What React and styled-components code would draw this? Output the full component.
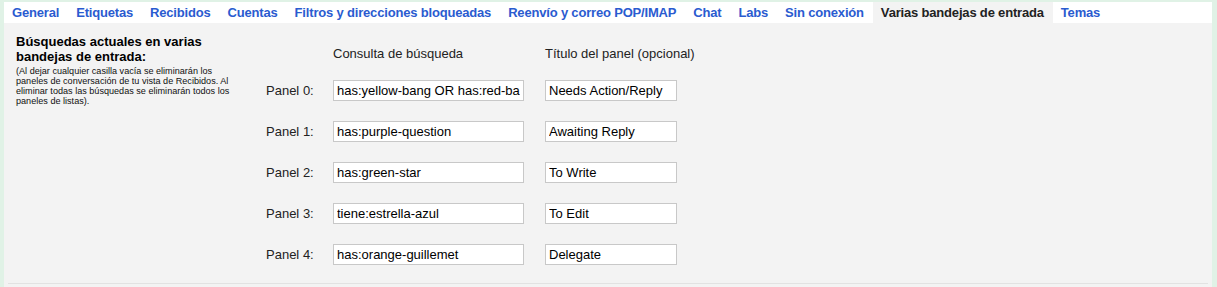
import React from "react";
import styled, { createGlobalStyle } from "styled-components";

const Global = createGlobalStyle`
  html, body { margin: 0; padding: 0; background: #e0f2e6; }
  body { font-family: Arial, "Liberation Sans", sans-serif; }
`;

const Frame = styled.div`
  padding: 2px 5px 0 4px;
  width: 1217px;
  box-sizing: border-box;
`;

const TabBar = styled.div`
  display: flex;
  height: 21px;
  background: #fff;
`;

const Tab = styled.div`
  display: flex;
  align-items: center;
  padding: 0 9px 0 8px;
  font-size: 13px;
  font-weight: bold;
  letter-spacing: -0.18px;
  white-space: nowrap;
  color: ${(p) => (p.$active ? "#222" : "#2a5bd0")};
  background: ${(p) => (p.$active ? "#f3f3f3" : "transparent")};
`;

const Content = styled.div`
  background: #f3f3f3;
  padding: 12px 0 0 0;
`;

const Body = styled.div`
  display: flex;
  padding: 0 0 18px 12px;
`;

const Description = styled.div`
  width: 220px;
  margin-right: 30px;
`;

const Heading = styled.div`
  font-size: 13px;
  font-weight: bold;
  line-height: 14.5px;
  color: #000;
`;

const Note = styled.div`
  font-size: 9.1px;
  line-height: 10px;
  color: #111;
  margin-top: 2px;
`;

const Panels = styled.div`
  display: grid;
  grid-template-columns: 67px 212px 132px;
  grid-template-rows: 14px;
  grid-auto-rows: 21px;
  row-gap: 20px;
  align-items: center;
  padding-top: 11px;
`;

const HeaderCell = styled.div`
  font-size: 13px;
  color: #222;
  align-self: start;
  line-height: 15px;
  white-space: nowrap;
  grid-column: ${(p) => p.$col};
`;

const Label = styled.div`
  font-size: 13px;
  color: #222;
`;

const Input = styled.input`
  box-sizing: border-box;
  width: ${(p) => p.$w}px;
  height: 21px;
  border: 1px solid #c8c8c8;
  background: #fff;
  padding: 0 3px;
  margin: 0;
  font-family: Arial, "Liberation Sans", sans-serif;
  font-size: 13px;
  color: #000;
  outline: none;
`;

const Rule = styled.div`
  height: 1px;
  background: #e2e2e2;
  margin: 0 4px;
`;

const Spacer = styled.div`
  height: 3px;
`;

const tabs = [
  "General",
  "Etiquetas",
  "Recibidos",
  "Cuentas",
  "Filtros y direcciones bloqueadas",
  "Reenvío y correo POP/IMAP",
  "Chat",
  "Labs",
  "Sin conexión",
  "Varias bandejas de entrada",
  "Temas",
];

const panels = [
  ["has:yellow-bang OR has:red-bang", "Needs Action/Reply"],
  ["has:purple-question", "Awaiting Reply"],
  ["has:green-star", "To Write"],
  ["tiene:estrella-azul", "To Edit"],
  ["has:orange-guillemet", "Delegate"],
];

export default function App() {
  return (
    <>
      <Global />
      <Frame>
        <TabBar>
          {tabs.map((t) => (
            <Tab key={t} $active={t === "Varias bandejas de entrada"}>
              {t}
            </Tab>
          ))}
        </TabBar>
        <Content>
          <Body>
            <Description>
              <Heading>Búsquedas actuales en varias bandejas de entrada:</Heading>
              <Note>
                (Al dejar cualquier casilla vacía se eliminarán los paneles de
                conversación de tu vista de Recibidos. Al eliminar todas las
                búsquedas se eliminarán todos los paneles de listas).
              </Note>
            </Description>
            <Panels>
              <HeaderCell $col={2}>Consulta de búsqueda</HeaderCell>
              <HeaderCell $col={3}>Título del panel (opcional)</HeaderCell>
              {panels.map(([q, t], i) => (
                <React.Fragment key={i}>
                  <Label>Panel {i}:</Label>
                  <Input $w={191} defaultValue={q} readOnly />
                  <Input $w={132} defaultValue={t} readOnly />
                </React.Fragment>
              ))}
            </Panels>
          </Body>
          <Rule />
          <Spacer />
        </Content>
      </Frame>
    </>
  );
}
